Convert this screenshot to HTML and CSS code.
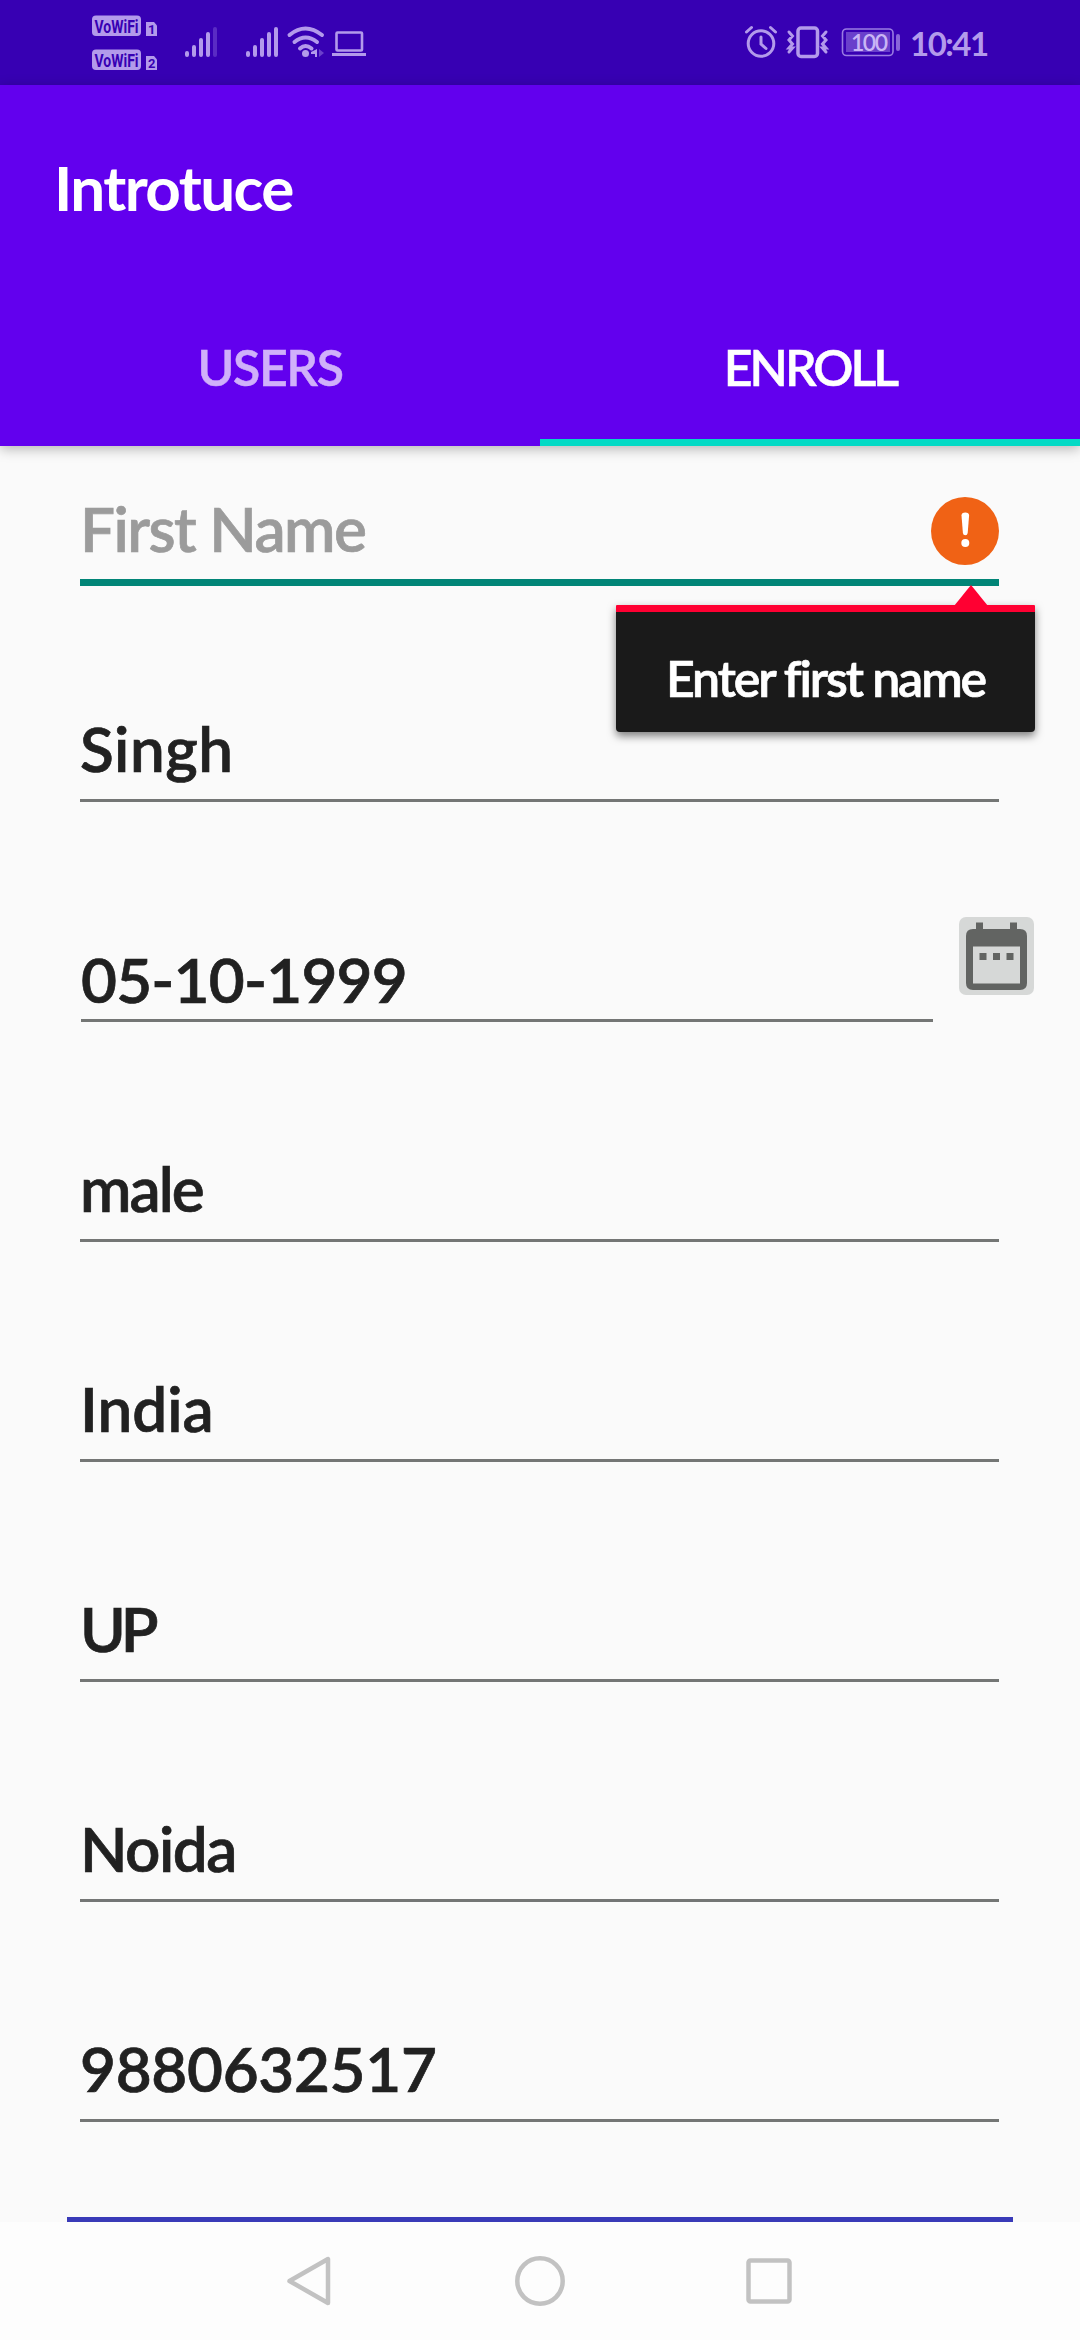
FILE: index.html
```html
<!DOCTYPE html>
<html lang="en">
<head>
<meta charset="utf-8">
<title>Introtuce</title>
<link rel="stylesheet" href="styles.css">
</head>
<body>
<div class="screen">
  <header class="status">
    <svg class="status-left" width="300" height="85" viewBox="80 0 300 85">
      <g fill="#b39aeb">
        <rect x="92" y="15.500" width="49" height="20.500" rx="4"/>
        <rect x="92" y="49.500" width="49" height="20.500" rx="4"/>
        <path d="M146 22h8l3 3.500V36h-11z"/>
        <path d="M146 56h8l3 3.500V70h-11z"/>
      </g>
      <g class="badge-text">
        <text x="94.500" y="32.500" textLength="44" lengthAdjust="spacingAndGlyphs">VoWiFi</text>
        <text x="94.500" y="66.500" textLength="44" lengthAdjust="spacingAndGlyphs">VoWiFi</text>
        <text class="sim" x="148" y="34">1</text>
        <text class="sim" x="148" y="68">2</text>
      </g>
      <g stroke="#b39aeb" stroke-width="4" stroke-linecap="round">
        <path d="M187 53v2M194 47v8M201 40v15M208 34v21M248 53v2M255 47v8M262 40v15M269 34v21M276 29v26"/>
        <path d="M215 29v26" stroke="#5a2bc4"/>
      </g>
      <g fill="none" stroke="#b39aeb" stroke-width="4" stroke-linecap="round">
        <path d="M289.500 35q16-13 32.500 0M294.500 42q11-9 22.500 0M300 48.500q5.500-5 11.500 0"/>
      </g>
      <circle cx="305.500" cy="53.500" r="3.500" fill="#b39aeb"/>
      <path d="M317 49v8h-2v-3h-4v-2z" fill="#b39aeb"/>
      <path d="M319 49l5 4-5 4z" fill="#6b40cb"/>
      <rect x="336.500" y="32.500" width="25.500" height="18" rx="1" fill="none" stroke="#b39aeb" stroke-width="2.600"/>
      <path d="M332 53h34v3h-34z" fill="#b39aeb"/>
    </svg>
    <div class="status-right">
      <svg width="160" height="85" viewBox="740 0 160 85">
        <g fill="none" stroke="#b39aeb" stroke-width="3" stroke-linecap="round">
          <circle cx="759" cy="43.500" r="12.800"/>
          <path d="M759 37v7l5 4.500M744.500 32l5-4.500M773.500 32l-5-4.500"/>
          <rect x="796" y="28" width="19.500" height="28.500" rx="3" stroke-width="3.500"/>
          <path d="M787 32l3.500 4-3.500 4 3.500 4-3.500 4 3.500 0-3.500 4M824 32l-3.500 4 3.500 4-3.500 4 3.500 4-3.500 0 3.500 4"/>
        </g>
        <rect x="840.500" y="29" width="50.500" height="26.500" rx="4" fill="none" stroke="#9a7ce2" stroke-width="1.600"/>
        <rect x="844" y="32" width="44" height="20" fill="#6a40cb"/>
        <rect x="894" y="34" width="4" height="17" rx="2" fill="#8965da"/>
        <text class="battery-text" x="849" y="51" textLength="37">100</text>
      </svg>
      <span class="clock">10:41</span>
    </div>
  </header>

  <header class="appbar">
    <h1 class="title">Introtuce</h1>
    <nav class="tabs">
      <a class="tab"><span class="tab-users">USERS</span></a>
      <a class="tab active"><span class="tab-enroll">ENROLL</span></a>
    </nav>
  </header>

  <main class="form">
    <div class="field focused">
      <span class="hint">First Name</span>
      <svg class="error-icon" width="68" height="68" viewBox="0 0 68 68">
        <circle cx="34" cy="34" r="34" fill="#f06215"/>
        <path d="M30.500 18.500q0-3 3.800-3t3.800 3L36.700 36q-.3 2.200-2.400 2.200T31.900 36z" fill="#fff"/>
        <circle cx="34.300" cy="46" r="4" fill="#fff"/>
      </svg>
      <div class="tooltip">
        <svg class="arrow" width="34" height="21" viewBox="0 0 34 21"><path d="M0 21L17 0l17 21z" fill="#ff0032"/></svg>
        <span class="tooltip-text">Enter first name</span>
      </div>
    </div>
    <div class="field second"><span class="v-singh">Singh</span></div>
    <div class="row">
      <div class="field date"><span class="v-date">05-10-1999</span></div>
      <button class="calendar" aria-label="Pick date">
        <svg width="75" height="78" viewBox="0 0 75 78">
          <path fill="#626462" fill-rule="evenodd" d="M17 5.500h7V12h27V5.500h7V12h3q7 0 7 7v47q0 7-7 7H14q-7 0-7-7V19q0-7 7-7h3zM14 29.500v37h47v-37z"/>
          <path fill="#626462" d="M20.500 36h7v7h-7zM34 36h7v7h-7zM47.500 36h7v7h-7z"/>
        </svg>
      </button>
    </div>
    <div class="field"><span class="v-male">male</span></div>
    <div class="field"><span class="v-india">India</span></div>
    <div class="field"><span class="v-up">UP</span></div>
    <div class="field"><span class="v-noida">Noida</span></div>
    <div class="field"><span class="v-phone">9880632517</span></div>
    <div class="submit"></div>
  </main>

  <footer class="navbar">
    <svg width="60" height="60" viewBox="0 0 60 60"><path d="M47 8v44L8.500 30z"/></svg>
    <svg width="60" height="60" viewBox="0 0 60 60"><circle cx="30" cy="30" r="22.700"/></svg>
    <svg width="60" height="60" viewBox="0 0 60 60"><rect x="9.500" y="9.500" width="41" height="41" rx="2"/></svg>
  </footer>
</div>
</body>
</html>
```
FILE: styles.css
```css
* { box-sizing: border-box; }
body { margin: 0; background: #fafafa; font-family: Lato, "Open Sans", sans-serif; }
.screen { width: 1080px; height: 2340px; display: flex; flex-direction: column; overflow: hidden; }

.status { height: 85px; flex: none; background: #3700b3; display: flex; justify-content: space-between; padding: 0 98px 0 80px; }
.status svg { display: block; }
.status-right { display: flex; gap: 8px; }
.badge-text { font: 700 18px Roboto, sans-serif; fill: #3700b3; }
.sim { font-size: 13px; }
.battery-text { font: 600 23px Lato, sans-serif; fill: #c9b5f5; }
.clock { width: 72px; font-size: 33px; font-weight: 700; line-height: 86px; color: #b39aeb; letter-spacing: -1.5px; white-space: nowrap; }

.appbar { height: 361px; flex: none; background: #6200ee; color: #fff; display: flex; flex-direction: column; justify-content: space-between; box-shadow: 0 3px 12px rgba(0, 0, 0, .28); position: relative; z-index: 1; }
.title { margin: 66px 0 0 54px; font-size: 62px; font-weight: 700; line-height: 72px; letter-spacing: -1.6px; }
.tabs { display: flex; height: 146px; }
.tab { flex: 1; display: flex; justify-content: center; padding-top: 37px; font-size: 50px; font-weight: 600; line-height: 60px; color: #d0b0fa; border-bottom: 7px solid transparent; -webkit-text-stroke: .5px; }
.tab.active { color: #fff; border-color: #03dac5; }
.tab-users { letter-spacing: -1.4px; }
.tab-enroll { letter-spacing: -3px; }

.form { flex: 1; display: flex; flex-direction: column; padding: 0 81px 0 80px; }
.field { height: 220px; flex: none; display: flex; flex-direction: column; justify-content: flex-end; padding-bottom: 15px; border-bottom: 3px solid #747675; font-size: 62px; font-weight: 600; line-height: 72px; color: #212121; white-space: nowrap; -webkit-text-stroke: .7px; }
.field span { align-self: flex-start; margin-left: 0; }
.field.focused { height: 140px; flex-direction: row; justify-content: space-between; align-items: flex-end; border-bottom: 7px solid #018577; position: relative; }
.field .hint { align-self: flex-end; color: #9b9b9b; letter-spacing: -1.5px; }
.v-singh { letter-spacing: .5px; }
.v-date { letter-spacing: -.8px; }
.v-male { letter-spacing: -2px; }
.v-up { letter-spacing: -5px; }
.v-noida { letter-spacing: -1.5px; }
.v-phone { letter-spacing: -.3px; }
.error-icon { margin-bottom: -1px; }
.field.second { height: 216px; }
.row { display: flex; height: 220px; margin-right: -35px; justify-content: space-between; }
.field.date { width: 852px; margin-left: 1px; padding-bottom: 4px; }
.calendar { width: 75px; height: 78px; margin: 115px 0 0; padding: 0; border: 0; border-radius: 7px; background: #d6d8d7; }
.calendar svg { display: block; }
.submit { height: 5px; margin: auto -14px 0 -13px; background: #393ab8; }

/* Validation bubble hanging below the field's underline */
.tooltip { position: absolute; left: 536px; top: 159px; width: 419px; height: 127px; padding-top: 36px; background: #1a1a1a; border-top: 7px solid #ff0032; border-radius: 1px 1px 4px 4px; box-shadow: 0 4px 8px rgba(0, 0, 0, .5); z-index: 2; color: #fff; font-size: 50px; line-height: 60px; letter-spacing: -2.1px; display: flex; justify-content: center; }
.arrow { position: absolute; left: 338px; top: -27px; }
.field .tooltip-text { margin: 0; }

.navbar { height: 118px; flex: none; background: #fdfdfd; display: flex; justify-content: center; align-items: center; gap: 169px; }
.navbar svg { fill: none; stroke: #c2c2c2; stroke-width: 4.5; stroke-linejoin: round; }
```
